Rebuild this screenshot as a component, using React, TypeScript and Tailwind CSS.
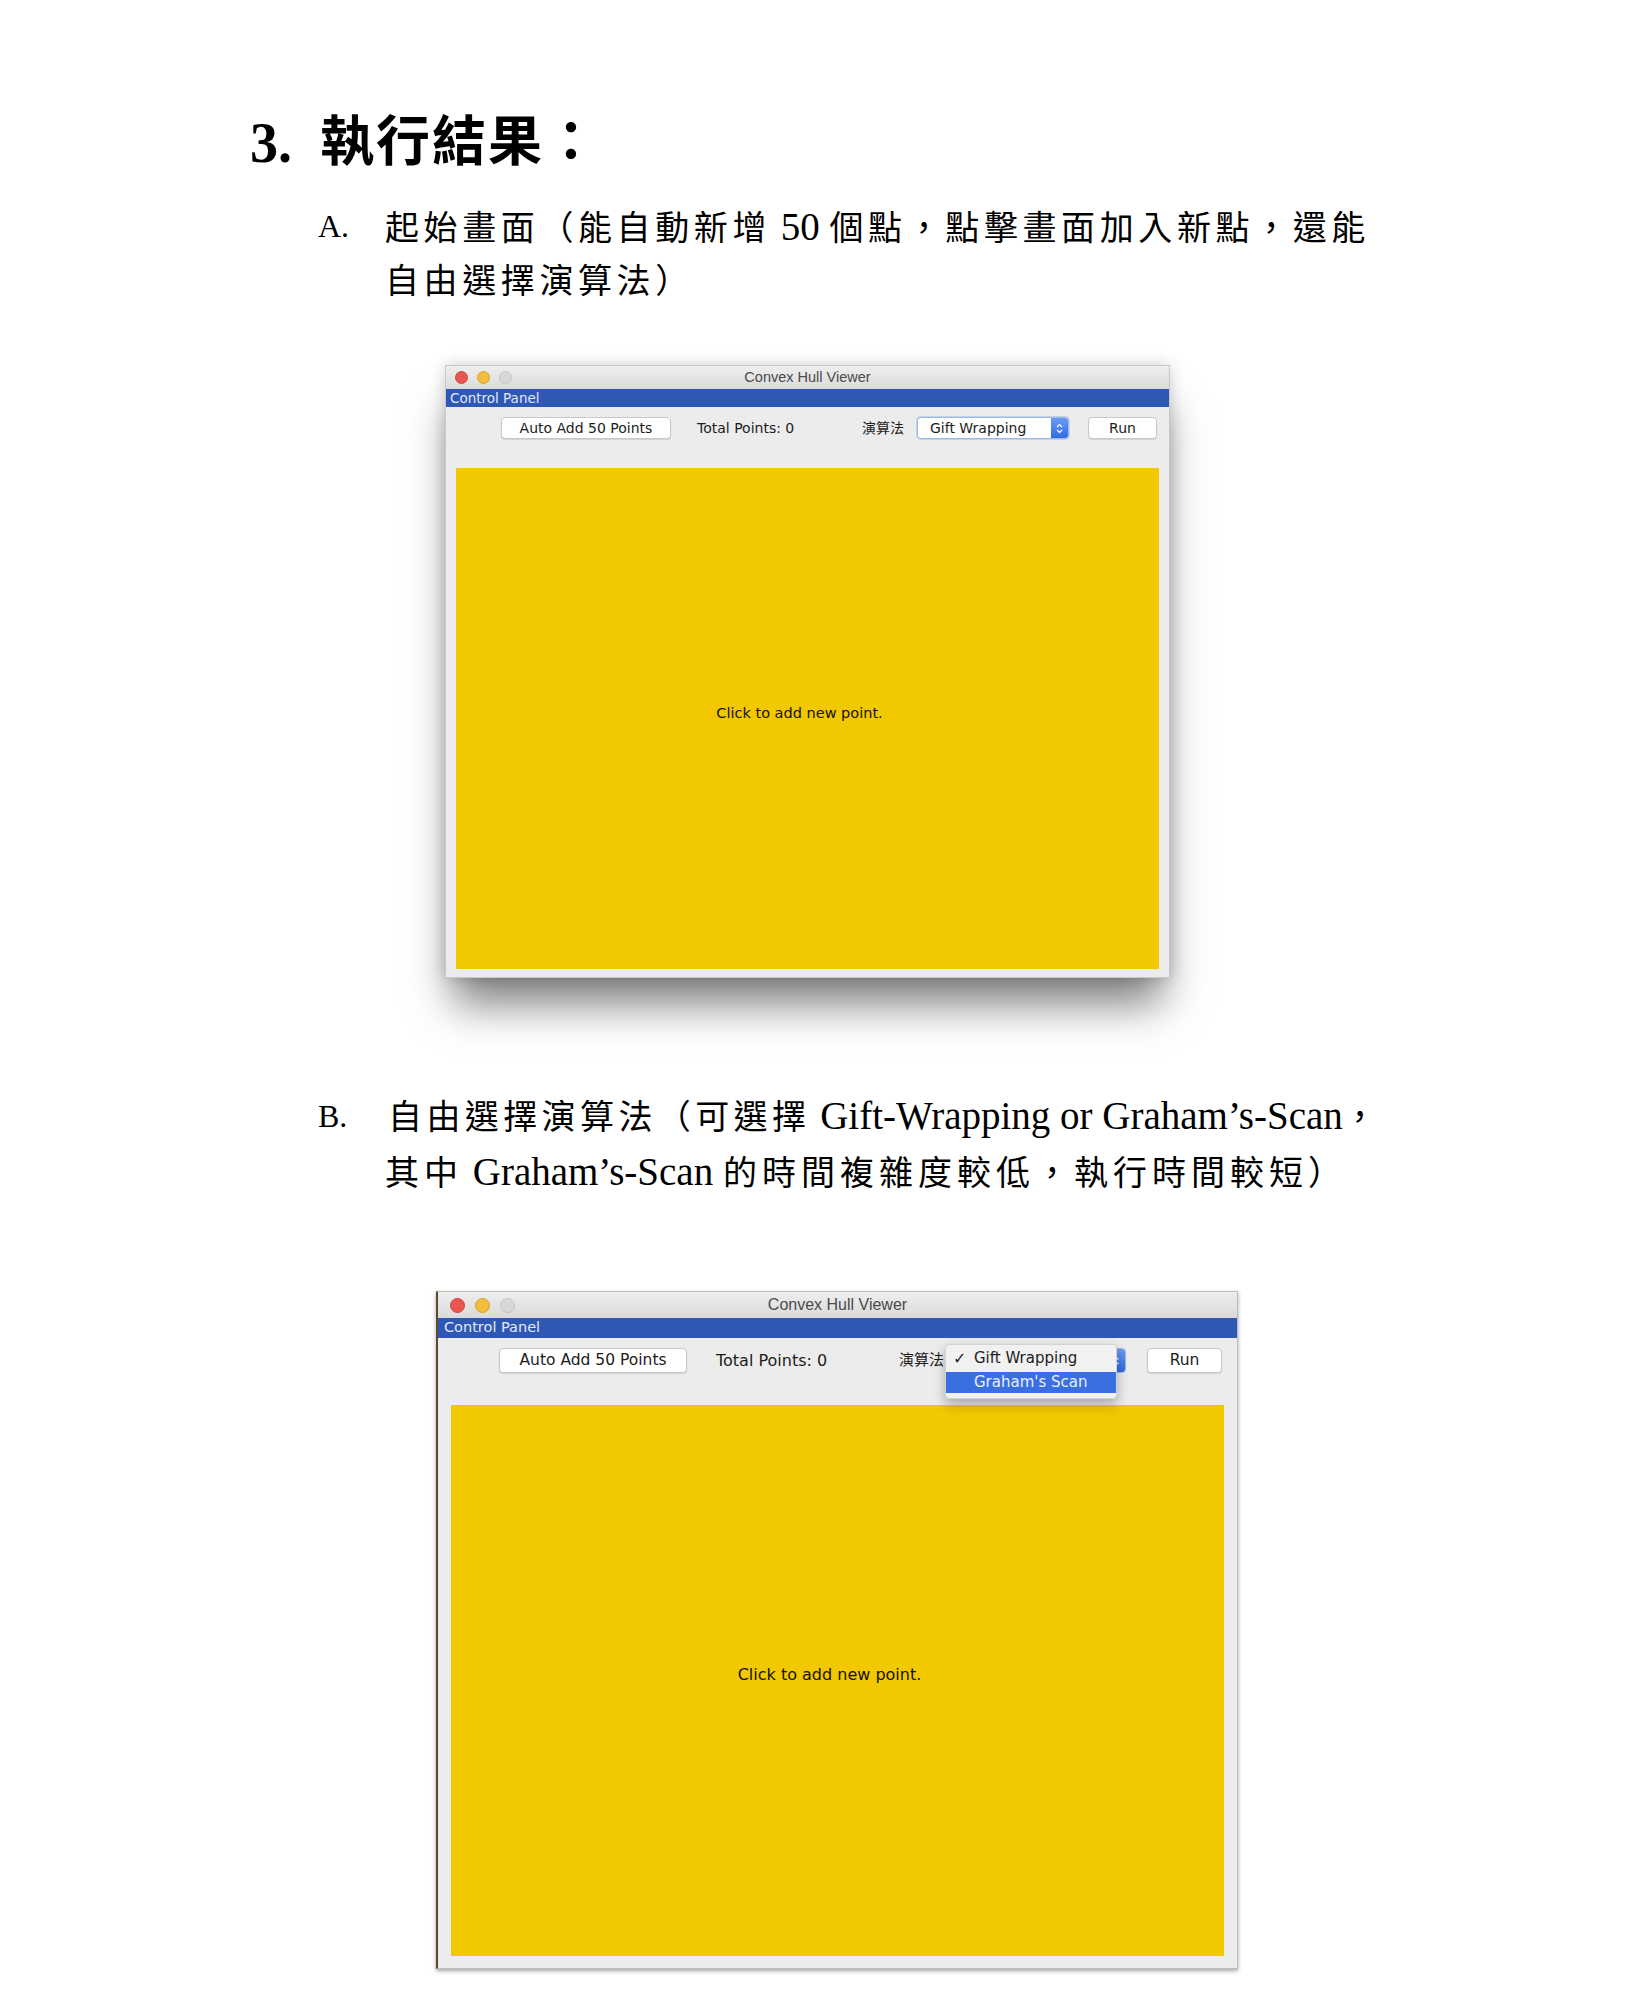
import React from 'react';

const doc = "font-['Liberation_Serif','Noto_Sans_CJK_TC',serif]";
const ui = "font-['DejaVu_Sans','Noto_Sans_CJK_TC',sans-serif]";
const sys = "font-['Liberation_Sans',sans-serif]";

// little up/down arrow used inside the mac style select box
function UpDown({ size }: { size: number }) {
  return (
    <svg width={size * 0.55} height={size} viewBox="0 0 8 14" fill="none">
      <path d="M1.5 5 L4 2.5 L6.5 5" stroke="white" strokeWidth="1.3" strokeLinecap="round" strokeLinejoin="round" />
      <path d="M1.5 9 L4 11.5 L6.5 9" stroke="white" strokeWidth="1.3" strokeLinecap="round" strokeLinejoin="round" />
    </svg>
  );
}

function Lights({ big }: { big?: boolean }) {
  const dot = big ? 'h-[15px] w-[15px]' : 'h-[13px] w-[13px]';
  return (
    <div className={big ? 'flex items-center gap-[10px] pl-[12px]' : 'flex items-center gap-[9px] pl-[9px]'}>
      <span className={`${dot} rounded-full border border-[#d0463e] bg-[#e8574f]`} />
      <span className={`${dot} rounded-full border border-[#d9a22a] bg-[#f1bd3d]`} />
      <span className={`${dot} rounded-full border border-[#c4c4c4] bg-[#d8d8d8]`} />
    </div>
  );
}

function FirstWindow() {
  return (
    <div className="ml-[445px] mt-[57px] flex h-[613px] w-[725px] flex-col border border-[#c9c9c9] bg-[#ececec] shadow-[0_34px_40px_-8px_rgba(0,0,0,0.5),0_0_14px_rgba(0,0,0,0.18)]">
      {/* title bar */}
      <div className="relative flex h-[23px] items-center bg-gradient-to-b from-[#eeeeee] to-[#dcdcdc]">
        <Lights />
        <span className={`absolute inset-0 flex items-center justify-center text-[14.5px] text-[#4a4a4a] ${sys}`}>
          Convex Hull Viewer
        </span>
      </div>
      <div className={`flex h-[18px] items-center bg-[#2f58b4] pl-[4px] text-[13.5px] text-[#e3e9f8] ${ui}`}>
        Control Panel
      </div>

      {/* controls */}
      <div className={`mt-[10px] flex h-[22px] items-center pl-[55px] text-[14px] text-[#1c1c1c] ${ui}`}>
        <div className="flex h-full w-[170px] items-center justify-center rounded-[4px] border border-[#c8c8c8] bg-white shadow-[0_1px_1px_rgba(0,0,0,0.12)]">
          Auto Add 50 Points
        </div>
        <div className="ml-[26px] w-[165px]">Total Points: 0</div>
        <div className="w-[55px] text-[14px]">演算法</div>
        <div className="flex h-full w-[152px] items-center justify-between rounded-[4px] border border-[#9db7e6] bg-white shadow-[0_0_0_1px_rgba(120,160,230,0.35)]">
          <span className="pl-[12px]">Gift Wrapping</span>
          <span className="flex h-full w-[17px] items-center justify-center rounded-r-[3px] bg-gradient-to-b from-[#6b9cf4] to-[#2f6ae0]">
            <UpDown size={13} />
          </span>
        </div>
        <div className="ml-[19px] flex h-full w-[69px] items-center justify-center rounded-[4px] border border-[#c8c8c8] bg-white shadow-[0_1px_1px_rgba(0,0,0,0.12)]">
          Run
        </div>
      </div>

      {/* drawing area */}
      <div className={`mx-[10px] mt-[29px] flex h-[501px] items-center justify-center bg-[#f2c800] pr-[16px] pb-[10px] text-[14.5px] text-[#151100] ${ui}`}>
        Click to add new point.
      </div>
    </div>
  );
}

function SecondWindow() {
  return (
    <div className="ml-[436px] mt-[90px] flex h-[678px] w-[802px] flex-col border border-[#bcbcbc] border-l-2 border-l-[#5d4b2c] bg-[#ececec] shadow-[0_2px_4px_rgba(0,0,0,0.35)]">
      <div className="relative flex h-[26px] items-center bg-gradient-to-b from-[#eeeeee] to-[#dadada]">
        <Lights big />
        <span className={`absolute inset-0 flex items-center justify-center text-[16px] text-[#4a4a4a] ${sys}`}>
          Convex Hull Viewer
        </span>
      </div>
      <div className={`flex h-[20px] items-center bg-[#2f58b4] pl-[6px] text-[14.5px] text-[#e3e9f8] ${ui}`}>
        Control Panel
      </div>

      <div className={`mt-[10px] flex h-[25px] items-center pl-[61px] text-[15.5px] text-[#1c1c1c] ${ui}`}>
        <div className="flex h-full w-[188px] items-center justify-center rounded-[4px] border border-[#c8c8c8] bg-white shadow-[0_1px_1px_rgba(0,0,0,0.12)]">
          Auto Add 50 Points
        </div>
        <div className="ml-[29px] w-[183px] text-[16px]">Total Points: 0</div>
        <div className="w-[57px] text-[15px]">演算法</div>
        <div className="relative h-full w-[170px] text-[15px]">
          <div className="flex h-full w-full items-center justify-end rounded-[4px] border border-[#9db7e6] bg-white">
            <span className="flex h-full w-[18px] items-center justify-center rounded-r-[3px] bg-gradient-to-b from-[#6b9cf4] to-[#2f6ae0]">
              <UpDown size={14} />
            </span>
          </div>
          {/* open menu */}
          <div className="absolute top-[-4px] left-[-11px] z-10 flex w-[172px] flex-col rounded-[4px] border border-[#d4d4d4] bg-[#f1f1f1] pb-[5px] shadow-[0_5px_12px_rgba(0,0,0,0.3)]">
            <div className="flex h-[27px] items-center">
              <span className="w-[28px] pl-[7px] text-[16px]">✓</span>
              <span>Gift Wrapping</span>
            </div>
            <div className="flex h-[21px] items-center bg-[#3a6fe2] pl-[28px] text-[#e9efff]">Graham's Scan</div>
          </div>
        </div>
        <div className="ml-[21px] flex h-full w-[75px] items-center justify-center rounded-[4px] border border-[#c8c8c8] bg-white shadow-[0_1px_1px_rgba(0,0,0,0.12)]">
          Run
        </div>
      </div>

      <div className={`mx-[13px] mt-[32px] flex h-[551px] items-center justify-center bg-[#f2c800] pr-[16px] pb-[12px] text-[16px] text-[#151100] ${ui}`}>
        Click to add new point.
      </div>
    </div>
  );
}

export default function App() {
  return (
    <div className={`min-h-[1999px] w-[1650px] bg-white text-black ${doc}`}>
      <div className="pt-[111px] pl-[250px]">
        <h1 className="flex h-[64px] items-center font-bold">
          <span className="w-[70px] text-[56px]">3.</span>
          <span className="text-[54px] tracking-[2px]">執行結果：</span>
        </h1>

        {/* item A */}
        <div className="mt-[25px] flex pl-[68px] text-[34px] leading-[53px]">
          <span className="w-[67px] text-[32px]">A.</span>
          <div className="tracking-[4.6px] whitespace-nowrap">
            <div>
              起始畫面（能自動新增
              <span className="text-[39px] tracking-normal"> 50 </span>
              個點，點擊畫面加入新點，還能
            </div>
            <div>自由選擇演算法）</div>
          </div>
        </div>
      </div>

      <FirstWindow />

      {/* item B */}
      <div className="mt-[111px] flex pl-[318px] text-[34px] leading-[54px]">
        <span className="w-[70px] text-[32px]">B.</span>
        <div className="tracking-[4.4px] whitespace-nowrap">
          <div>
            自由選擇演算法（可選擇
            <span className="text-[39px] tracking-normal"> Gift-Wrapping or Graham’s-Scan</span>
            ，
          </div>
          <div className="-ml-[3px] tracking-[5px]">
            其中
            <span className="text-[39px] tracking-normal"> Graham’s-Scan </span>
            的時間複雜度較低，執行時間較短）
          </div>
        </div>
      </div>

      <SecondWindow />
    </div>
  );
}
